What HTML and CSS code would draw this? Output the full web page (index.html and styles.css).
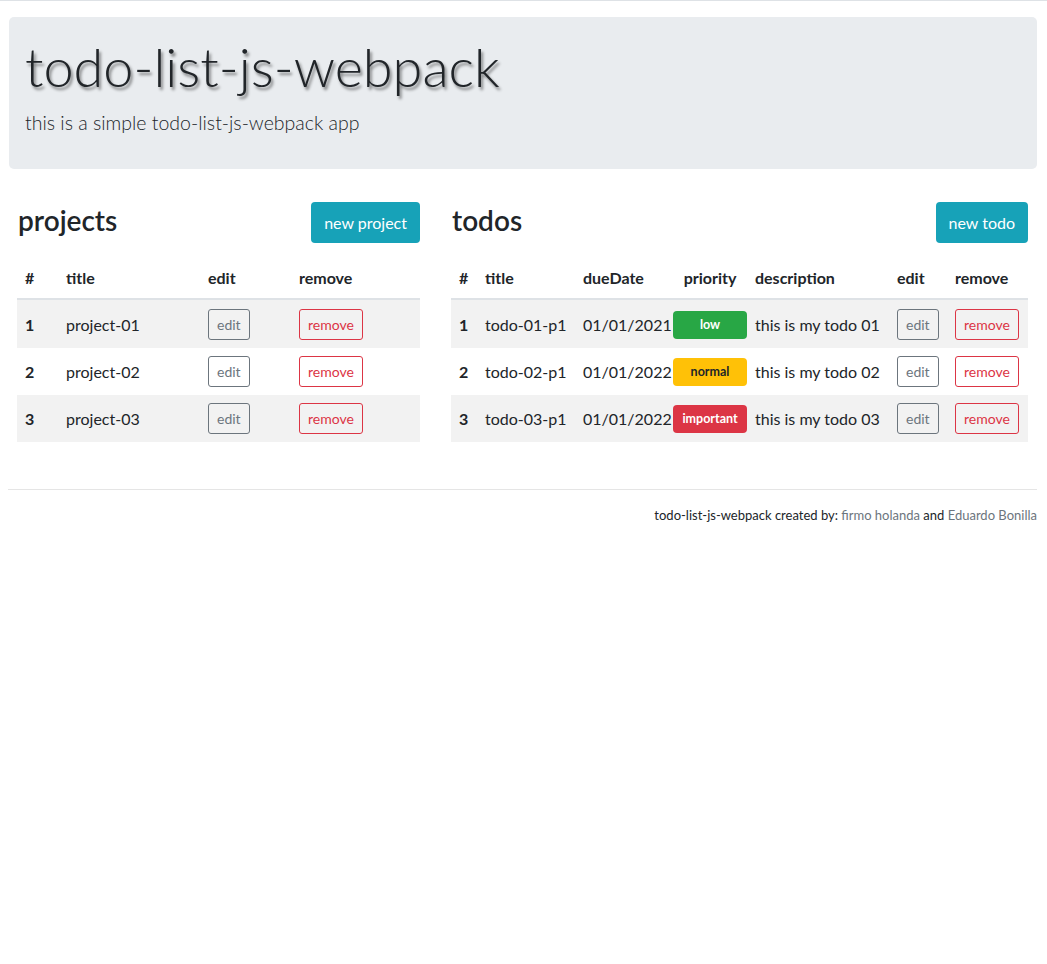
FILE: index.html
```html
<!DOCTYPE html>
<html lang="en">
<head>
<meta charset="utf-8">
<title>todo-list-js-webpack</title>
<link rel="stylesheet" href="styles.css">
</head>
<body>
<div class="page">
  <header class="jumbo">
    <h1 class="jumbo-title">todo-list-js-webpack</h1>
    <p class="lead">this is a simple todo-list-js-webpack app</p>
  </header>

  <main class="panels">
    <section class="panel">
      <div class="panel-head">
        <h3 class="panel-title">projects</h3>
        <button class="btn btn-info">new project</button>
      </div>
      <table class="table">
        <colgroup>
          <col class="w-41"><col class="w-142"><col class="w-91"><col class="w-129">
        </colgroup>
        <thead>
          <tr><th>#</th><th>title</th><th>edit</th><th>remove</th></tr>
        </thead>
        <tbody>
          <tr><th class="num">1</th><td>project-01</td><td><button class="btn-sm btn-edit">edit</button></td><td><button class="btn-sm btn-remove">remove</button></td></tr>
          <tr><th class="num">2</th><td>project-02</td><td><button class="btn-sm btn-edit">edit</button></td><td><button class="btn-sm btn-remove">remove</button></td></tr>
          <tr><th class="num">3</th><td>project-03</td><td><button class="btn-sm btn-edit">edit</button></td><td><button class="btn-sm btn-remove">remove</button></td></tr>
        </tbody>
      </table>
    </section>

    <section class="panel">
      <div class="panel-head">
        <h3 class="panel-title">todos</h3>
        <button class="btn btn-info">new todo</button>
      </div>
      <table class="table">
        <colgroup>
          <col class="w-26"><col class="w-98"><col class="w-90"><col class="w-82"><col class="w-142"><col class="w-58"><col class="w-81">
        </colgroup>
        <thead>
          <tr><th>#</th><th>title</th><th>dueDate</th><th class="prio">priority</th><th>description</th><th>edit</th><th>remove</th></tr>
        </thead>
        <tbody>
          <tr><th class="num">1</th><td>todo-01-p1</td><td>01/01/2021</td><td class="prio"><span class="badge badge-low">low</span></td><td>this is my todo 01</td><td><button class="btn-sm btn-edit">edit</button></td><td><button class="btn-sm btn-remove">remove</button></td></tr>
          <tr><th class="num">2</th><td>todo-02-p1</td><td>01/01/2022</td><td class="prio"><span class="badge badge-normal">normal</span></td><td>this is my todo 02</td><td><button class="btn-sm btn-edit">edit</button></td><td><button class="btn-sm btn-remove">remove</button></td></tr>
          <tr><th class="num">3</th><td>todo-03-p1</td><td>01/01/2022</td><td class="prio"><span class="badge badge-important">important</span></td><td>this is my todo 03</td><td><button class="btn-sm btn-edit">edit</button></td><td><button class="btn-sm btn-remove">remove</button></td></tr>
        </tbody>
      </table>
    </section>
  </main>

  <hr class="rule">
  <footer class="footer">
    <p>todo-list-js-webpack created by: <a href="#" class="flink">firmo holanda</a> and <a href="#" class="flink">Eduardo Bonilla</a></p>
  </footer>
</div>
</body>
</html>
```

FILE: styles.css
```css
* { box-sizing: border-box; }

body {
  margin: 0;
  border-top: 1px solid #dee2e6;
  font-family: "Lato", "Open Sans", sans-serif;
  font-size: 16px;
  line-height: 1.5;
  color: #212529;
  background: #fff;
}

.page {
  padding: 16px 10px 0 9px;
}

.jumbo {
  background: #e9ecef;
  border-radius: 5px;
  padding: 16px 16px 15px;
}

.jumbo-title {
  margin: 0 0 8px;
  font-size: 54px;
  font-weight: 300;
  line-height: 67px;
  text-shadow: 2px 3px 3px rgba(0, 0, 0, 0.45);
}

.lead {
  margin: 0 0 16px;
  font-size: 19.5px;
  font-weight: 300;
  line-height: 30px;
}

.panels {
  display: grid;
  grid-template-columns: 403px 577px;
  column-gap: 31px;
  margin: 33px 0 0 8px;
  align-items: start;
}

.panel-head {
  display: flex;
  justify-content: space-between;
  align-items: center;
  height: 41px;
  margin-bottom: 15px;
}

.panel-title {
  margin: 0 0 4px 1px;
  font-size: 28px;
  font-weight: 600;
  line-height: 1.2;
}

.btn {
  font-family: inherit;
  border: 0;
  border-radius: 4px;
  cursor: pointer;
}

.btn-info {
  background: #17a2b8;
  color: #fff;
  font-size: 16px;
  line-height: 24px;
  height: 41px;
  padding: 0 13px;
}

.table {
  width: 100%;
  border-collapse: separate;
  border-spacing: 0;
  table-layout: fixed;
}

.w-26 { width: 26px; }
.w-41 { width: 41px; }
.w-58 { width: 58px; }
.w-81 { width: 81px; }
.w-82 { width: 82px; }
.w-90 { width: 90px; }
.w-91 { width: 91px; }
.w-98 { width: 98px; }
.w-129 { width: 129px; }
.w-142 { width: 142px; }

.table th,
.table td {
  padding: 8px;
  text-align: left;
  vertical-align: middle;
  white-space: nowrap;
}

.table thead th {
  font-weight: 700;
  border-bottom: 2px solid #dee2e6;
  vertical-align: bottom;
}

.table tbody tr:first-child th,
.table tbody tr:first-child td {
  padding-top: 9px;
}

.table tbody tr:nth-child(odd) th,
.table tbody tr:nth-child(odd) td {
  background: #f2f2f2;
}

.table .num { font-weight: 700; }

.table .prio {
  padding-right: 0;
}
.table thead th.prio { text-align: center; }

.btn-sm {
  font-family: inherit;
  font-size: 14px;
  line-height: 21px;
  padding: 4px 8px;
  background: transparent;
  border: 1px solid;
  border-radius: 3px;
  cursor: pointer;
  display: inline-block;
}

.btn-edit {
  color: #6c757d;
  border-color: #6c757d;
}

.btn-remove {
  color: #dc3545;
  border-color: #dc3545;
}

.badge {
  display: block;
  height: 28px;
  line-height: 28px;
  border-radius: 4px;
  text-align: center;
  font-size: 12.5px;
  font-weight: 700;
}

.badge-low { background: #28a745; color: #fff; }
.badge-normal { background: #ffc107; color: #212529; }
.badge-important { background: #dc3545; color: #fff; }

.rule {
  margin: 47px 0 16px -1px;
  border: 0;
  border-top: 1px solid rgba(0, 0, 0, 0.1);
}

.footer p {
  margin: 0;
  text-align: right;
  font-size: 13px;
  line-height: 19px;
}

.flink {
  color: #6c757d;
  text-decoration: none;
}
```
